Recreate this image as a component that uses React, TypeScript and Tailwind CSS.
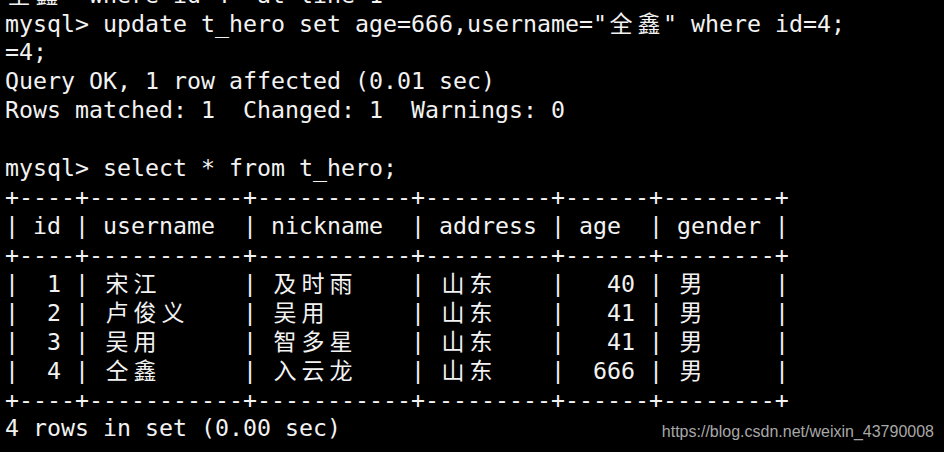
// mysql terminal screenshot: white monospace text on black, CJK chars take two cells
const lines: string[] = [
  '全鑫" where id=4" at line 1',
  'mysql> update t_hero set age=666,username="全鑫" where id=4;',
  '=4;',
  'Query OK, 1 row affected (0.01 sec)',
  'Rows matched: 1  Changed: 1  Warnings: 0',
  '',
  'mysql> select * from t_hero;',
  '+----+-----------+-----------+---------+------+--------+',
  '| id | username  | nickname  | address | age  | gender |',
  '+----+-----------+-----------+---------+------+--------+',
  '|  1 | 宋江      | 及时雨    | 山东    |   40 | 男     |',
  '|  2 | 卢俊义    | 吴用      | 山东    |   41 | 男     |',
  '|  3 | 吴用      | 智多星    | 山东    |   41 | 男     |',
  '|  4 | 仝鑫      | 入云龙    | 山东    |  666 | 男     |',
  '+----+-----------+-----------+---------+------+--------+',
  '4 rows in set (0.00 sec)',
];

const isWide = (ch: string) => /[\u3400-\u9fff]/.test(ch);

function TermLine({ text }: { text: string }) {
  // split into runs so that wide chars get their own double cell
  const parts: { wide: boolean; s: string }[] = [];
  for (const ch of Array.from(text)) {
    const wide = isWide(ch);
    const last = parts[parts.length - 1];
    if (!wide && last && !last.wide) last.s += ch;
    else parts.push({ wide, s: ch });
  }

  return (
    <div className="h-[28.93px] leading-[28.93px] whitespace-pre">
      {parts.map((p, i) =>
        p.wide ? (
          <span
            key={i}
            className="inline-block w-[28px] text-center text-[23px] leading-none font-['Noto_Sans_CJK_SC',sans-serif]"
          >
            {p.s}
          </span>
        ) : (
          <span key={i}>{p.s}</span>
        )
      )}
    </div>
  );
}

export default function App() {
  return (
    <div className="relative w-[944px] h-[452px] overflow-hidden bg-black">
      <div className="mt-[-19.4px] pl-[5px] text-[#f2f2f2] text-[23.25px] font-['DejaVu_Sans_Mono',monospace]">
        {lines.map((l, i) => (
          <TermLine key={i} text={l} />
        ))}
      </div>

      {/* csdn watermark */}
      <div className="absolute right-[10px] top-[422.5px] text-[16px] leading-[18px] text-[#a8a8a8] font-['Liberation_Sans',Arial,sans-serif]">
        https://blog.csdn.net/weixin_43790008
      </div>
    </div>
  );
}
